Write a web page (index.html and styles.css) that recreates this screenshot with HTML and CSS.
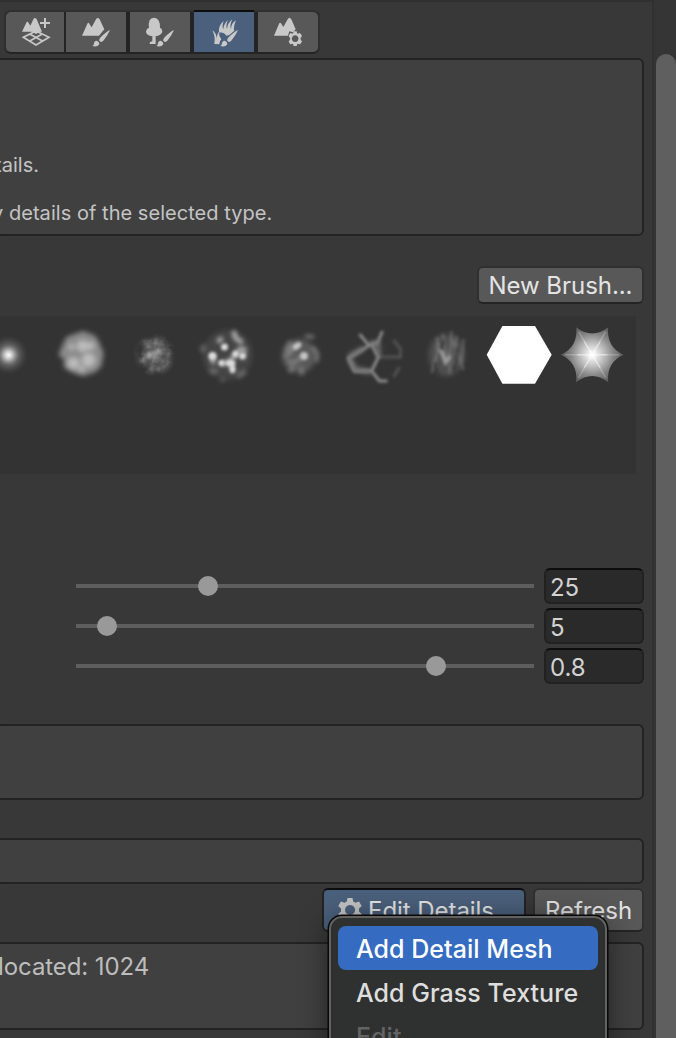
FILE: index.html
```html
<!DOCTYPE html>
<html lang="en">
<head>
<meta charset="utf-8">
<title>Terrain Details</title>
<link rel="stylesheet" href="styles.css">
</head>
<body>
<div class="window">
<main class="inspector">
  <nav class="toolbar">
    <button class="tool first"><svg width="58" height="40" viewBox="18 36 174 120"><path d="M66 95L80 66Q83 64 86 69L91 77 100 58Q105 50 110 58L126 95Z"/><path d="M135 54V84M120 69H150" class="line w6"/><path d="M70 112L108 93 147 112 108 135ZM89 102L129 124M127 102L88 124" class="line w5"/><path d="M93 94H123L108 102Z"/></svg></button>
    <button class="tool"><svg width="60" height="40" viewBox="198 36 180 120"><path d="M246 107L262 71Q265 66 268 71L275 82 288 58Q293 50 299 58L313 88 297 107Z"/><path d="M330 90Q319 94 300 114L297 121 303 127 310 122Q324 105 330 90ZM291 122Q300 127 297 134Q291 142 277 138Q282 136 282 129Q284 121 291 122Z"/></svg></button>
    <button class="tool"><svg width="60" height="40" viewBox="390 36 180 120"><path d="M447 84Q443 53 462 53Q481 54 480 84Q486 85 487 95Q483 108 462 109Q439 108 438 95Q440 85 447 84ZM457 108H467V132H449L450 126 457 124Z"/><path d="M522 90Q511 94 492 114L489 121 495 127 502 122Q516 105 522 90ZM483 122Q492 127 489 134Q483 142 469 138Q474 136 474 129Q476 121 483 122Z"/></svg></button>
    <button class="tool selected"><svg width="60" height="40" viewBox="102 36 180 120"><path d="M177 97Q174 79 191 62Q185 80 190 88Q190 73 204 60Q196 78 201 87Q202 70 217 58Q208 77 213 87Q213 70 228 61Q219 83 223 92L208 105 199 107Q192 97 177 97ZM163 132Q167 110 157 91Q169 98 171 120Q169 105 177 95Q176 108 184 118Q178 123 178 133Z"/><path d="M234 90Q223 94 204 114L201 121 207 127 214 122Q228 105 234 90ZM195 122Q204 127 201 134Q195 142 181 138Q186 136 186 129Q188 121 195 122Z"/></svg></button>
    <button class="tool last"><svg width="60" height="40" viewBox="294 36 180 120"><path d="M342 107L357 71Q360 66 364 71L370 81 383 58Q388 49 394 58L407 88 399 97 388 94 384 107Z"/><path fill-rule="evenodd" d="M401 94H410L412 101 420 99 426 107 421 116 426 125 420 133 412 131 410 138H401L399 131 391 133 386 125 391 116 386 107 391 99 399 101ZM405 106A10 10 0 1 0 406 106Z"/></svg></button>
  </nav>

  <section class="box help"><p>tails.</p><p class="second">y details of the selected type.</p></section>
  <button class="button brush-button">New Brush...</button>

  <section class="brushes">
    <svg class="hidden" width="0" height="0"><defs>
      <radialGradient id="dot"><stop stop-color="#fff"/><stop offset=".2" stop-color="#c5c5c5"/><stop offset=".5" stop-color="#777" stop-opacity=".7"/><stop offset="1" stop-color="#444" stop-opacity="0"/></radialGradient>
      <radialGradient id="star" gradientUnits="userSpaceOnUse" cx="0" cy="0" r="32"><stop stop-color="#fff"/><stop offset=".3" stop-color="#ccc"/><stop offset=".65" stop-color="#888"/><stop offset="1" stop-color="#555"/></radialGradient>
      <radialGradient id="fade"><stop stop-color="#fff"/><stop offset=".55" stop-color="#fff"/><stop offset="1" stop-color="#000"/></radialGradient>
      <mask id="round"><circle r="22" fill="url(#fade)"/></mask>
      <filter id="b1" x="-40%" y="-40%" width="180%" height="180%"><feGaussianBlur stdDeviation="1.4"/></filter>
      <filter id="b2" x="-40%" y="-40%" width="180%" height="180%"><feGaussianBlur stdDeviation="2.2"/></filter>
      <filter id="b3" x="-40%" y="-40%" width="180%" height="180%"><feGaussianBlur stdDeviation="2.8"/></filter>
      <filter id="noise" x="0" y="0" width="100%" height="100%"><feTurbulence type="fractalNoise" baseFrequency=".12" numOctaves="3" seed="4"/><feColorMatrix values="0 0 0 0 .6  0 0 0 0 .6  0 0 0 0 .6  2.2 0 0 0 -.8"/><feGaussianBlur stdDeviation=".7"/></filter>
    </defs></svg>
    <svg class="brush" viewBox="-36.5 -38 73 76"><circle r="20" fill="url(#dot)"/></svg>
    <svg class="brush" viewBox="-36.5 -38 73 76"><g filter="url(#b3)"><path d="M-15-18L-7-21 2-24 14-19 18-12 22-2 20 11 14 17 2 21-8 18-18 12-17 5-23 0-19-10Z" fill="#8b8b8b"/></g><g filter="url(#b3)" fill="#c8c8c8" opacity=".8"><circle cx="-8" cy="8" r="6"/><circle cx="7" cy="5" r="7"/><circle cx="1" cy="-9" r="6"/><circle cx="-10" cy="-8" r="3"/><circle cx="9" cy="-9" r="4"/><circle cx="0" cy="14" r="3"/></g></svg>
    <svg class="brush" viewBox="-36.5 -38 73 76"><g filter="url(#b2)" fill="#777" opacity=".75"><path d="M-12-13L0-17 8-17 12-9 17-2 17 9 10 17-5 17-9 9-16 9-13 2-11-5Z" opacity=".6"/><path d="M-8-3L1-8 9-4 2 4-6 2Z"/></g><g mask="url(#round)"><rect x="-22" y="-22" width="44" height="44" filter="url(#noise)" opacity=".4"/></g><g filter="url(#b1)" fill="#a5a5a5"><circle cx="-5" cy="0" r="3"/><circle cx="4" cy="-4" r="2.3"/><circle cx="0" cy="-2" r="2"/></g></svg>
    <svg class="brush" viewBox="-36.5 -38 73 76"><g filter="url(#b3)" fill="#777" opacity=".25"><circle r="25"/></g><g filter="url(#b2)" fill="none" stroke="#aaa" stroke-width="5"><path d="M-15 1L-14 9M-10-13L-5-17M6-24L8-17 15-12M-7 9L2 7 6 17M3 6L9-2 13-6 19-5M17-2L14 4"/><path d="M-25-3L-24-10M-18 16L-10 16M10 22L18 16M-6 24L-4 26" opacity=".4"/></g><g filter="url(#b1)" fill="#ddd"><circle cx="-3" cy="-8" r="3.5"/><circle cx="-15" cy="1" r="4"/><ellipse cx="3" cy="8" rx="5" ry="3"/><circle cx="-6" cy="8" r="3"/><circle cx="15" cy="1" r="3"/><ellipse cx="5" cy="14" rx="2.5" ry="4"/><circle cx="8" cy="-1" r="3"/></g></svg>
    <svg class="brush" viewBox="-36.5 -38 73 76"><g transform="translate(-1.5 0)"><g filter="url(#b3)"><circle r="17" cy="1" fill="#777" opacity=".55"/></g><g filter="url(#b2)" fill="none" stroke="#999" stroke-width="4"><path d="M-15 2L-9-2-4-8 0-12M-11-13L-6-8M4 1L-4 7-12 7M13-8L18-2 18 7M6-19L15-18M-10 17L-5 11M2 12L3 20M-14-7L-8-5" opacity=".6"/></g><g filter="url(#b1)" fill="#c4c4c4"><circle cx="5" cy="1" r="4"/><ellipse cx="-2" cy="-9" rx="5" ry="3" transform="rotate(-35 -2 -9)"/></g></g></svg>
    <svg class="brush" viewBox="-36.5 -38 73 76"><g filter="url(#b1)" fill="none" stroke="#8b8b8b" stroke-width="3"><path d="M-2-11L5 2-2 16-19 16-25 3-5-9-2-11 4-12 9-24M-5-10L-14-21M-2 16L6 26 14 26"/><path d="M5 2H27V-6L20-15M20 22L26 12" opacity=".35"/></g><g filter="url(#b2)" fill="none" stroke="#777" stroke-width="6" opacity=".75"><path d="M-24 4L-18 14-3 17M-4-11L4-12 5 1M-25 2L-10-7"/></g></svg>
    <svg class="brush" viewBox="-36.5 -38 73 76"><g filter="url(#b3)"><ellipse rx="18" ry="21" fill="#777" opacity=".4"/></g><g filter="url(#b1)" stroke-width="2.5" stroke="#999" fill="none"><path d="M-15 18L-7-10 0 8 6-14 17 15M-9-18L-10 5M-4-21L0 1M5-24L3 19M10-19L8 10M17-16L15 11" opacity=".38"/><path d="M-6-6L-1 7 4 1" stroke-width="4"/></g><path d="M-3-15L-5-5M11-7L8 16M-12 8L-9 18" stroke="#303030" stroke-width="2" filter="url(#b1)"/></svg>
    <svg class="brush" viewBox="-36.5 -38 73 76"><path transform="translate(-.8 0)" d="M-16.3-29H16.3L33-.3 16.3 28.7H-16.3L-32-.3Z" fill="#fff"/></svg>
    <svg class="brush" viewBox="-36.5 -38 73 76"><g transform="translate(-.3 -.3)"><path d="M-31.5 0Q-14-7.5-16-27.5Q0-15 16-27.5Q14-7.5 31.5 0Q14 7.5 16 27.5Q0 15-16 27.5Q-14 7.5-31.5 0Z" fill="url(#star)"/><path d="M-27 0H27M-13.5-23L13.5 23M13.5-23L-13.5 23" stroke="#fff" stroke-width="1.5" opacity=".22"/><path d="M-15 0H15M-8-13L8 13M8-13L-8 13" stroke="#fff" stroke-width="1.5" opacity=".35"/><circle r="4" fill="#fff" opacity=".5" filter="url(#b1)"/></g></svg>
  </section>

  <section class="settings">
    <div class="row"><div class="slider"><i class="thumb" style="margin-left:122px"></i></div><output class="field">25</output></div>
    <div class="row"><div class="slider"><i class="thumb" style="margin-left:21px"></i></div><output class="field">5</output></div>
    <div class="row"><div class="slider"><i class="thumb" style="margin-left:350px"></i></div><output class="field">0.8</output></div>
  </section>
  <section class="box details"></section>
  <section class="box summary"></section>
  <div class="actions"><button class="button edit"><svg width="24" height="24" viewBox="0 0 24 24"><path fill-rule="evenodd" d="M9.5 0H14.5L15.2 3.5 17.5 4.8 21 3.5 23.7 8 21 10.5V13.5L23.7 16 21 20.5 17.5 19.2 15.2 20.5 14.5 24H9.5L8.8 20.5 6.5 19.2 3 20.5.3 16 3 13.5V10.5L.3 8 3 3.5 6.5 4.8 8.8 3.5ZM12 7A5 5 0 1 0 12.1 7Z"/></svg><span>Edit Details...</span></button><button class="button">Refresh</button></div>
  <section class="box allocation"><p>located: 1024</p></section>
</main>
<aside class="scrollbar"><div class="scroll-thumb"></div></aside>
<div class="menu"><div class="item active">Add Detail Mesh</div><div class="item">Add Grass Texture</div><div class="item disabled">Edit</div></div>
</div>
</body>
</html>
```
FILE: styles.css
```css
* { box-sizing: border-box; }
body { margin: 0; background: #383838; font-family: Inter, "Liberation Sans", sans-serif; color: #c4c4c4; }
p { margin: 0; }
button { appearance: none; border: 0; padding: 0; margin: 0; font: inherit; color: inherit; }
.window { position: relative; width: 676px; height: 1038px; display: flex; overflow: hidden; }
.inspector { width: 654px; height: 1038px; overflow: hidden; border-top: 2px solid #303030; border-right: 2px solid #303030; display: flex; flex-direction: column; align-items: flex-start; flex: none; }
.toolbar { display: flex; margin: 8px 0 0 4px; padding: 2px; height: 44px; background: linear-gradient(#303030 2px, #242424 2px); border-radius: 7px; flex: none; }
.tool { height: 40px; background: #585858; display: flex; margin-right: 4px; }
.tool.first { border-radius: 5px 0 0 5px; margin-right: 2px; box-shadow: -2px 0 #303030; }
.tool.last { border-radius: 0 5px 5px 0; margin-right: 0; box-shadow: 2px 0 #303030; }
.tool.selected { background: #4b607c; box-shadow: 0 -2px #0d0d0d; }
.tool svg { fill: #c8c8c8; }
.line { fill: none; stroke: #c8c8c8; }
.w6 { stroke-width: 6; }
.w5 { stroke-width: 5; }
.box { width: 648px; margin-left: -4px; border: 2px solid #232323; border-radius: 6px; background: #404040; flex: none; }
.help { height: 178px; margin-top: 4px; padding: 93px 0 0 2px; font-size: 20px; line-height: 24px; letter-spacing: .04px; overflow: hidden; }
.help p { margin-left: -5px; white-space: pre; }
.help .second { margin-top: 24px; margin-left: -8px; }
.button { height: 38px; background: #585858; border: 2px solid #303030; border-bottom-color: #242424; border-radius: 6px; font-size: 24px; color: #e4e4e4; flex: none; letter-spacing: -.05px; display: flex; align-items: center; justify-content: center; }
.brush-button { width: 167px; margin: 30px 0 0 477px; }
.brushes { width: 636px; height: 158px; background: #333; margin-top: 12px; display: flex; align-items: flex-start; flex: none; overflow: hidden; }
.hidden { position: absolute; }
.brush { width: 73px; height: 76px; margin-top: 1px; flex: none; }
.hidden + .brush { margin-left: -28px; }
.settings { margin: 94px 0 0 76px; display: flex; flex-direction: column; gap: 4px; }
.row { display: flex; gap: 10px; align-items: center; }
.slider { width: 458px; height: 4px; background: #5e5e5e; display: flex; align-items: center; }
.thumb { width: 20px; height: 20px; border-radius: 50%; background: #999; flex: none; }
.field { width: 100px; height: 36px; background: #2a2a2a; border: 2px solid #212121; border-top-color: #0d0d0d; border-radius: 6px; padding-left: 4px; font-size: 24px; line-height: 35px; color: #d2d2d2; letter-spacing: -.1px; }
.details { height: 76px; margin-top: 40px; }
.summary { height: 46px; margin-top: 38px; }
.actions { display: flex; margin: 4px 0 0 322px; gap: 7px; flex: none; }
.actions .button { height: 44px; width: 111px; }
.actions .edit { width: 204px; background: #4b607c; border-color: #0d0d0d #232323 #232323; justify-content: flex-start; padding-left: 14px; gap: 6px; }
.edit svg { fill: #c4c4c4; }
.allocation { height: 88px; margin-top: 10px; padding: 8px 0 0 0; font-size: 24px; line-height: 30px; color: #bdbdbd; letter-spacing: -.08px; }
.scrollbar { width: 22px; background: #353535; padding: 54px 0 0 2px; }
.scroll-thumb { width: 20px; height: 1000px; background: #5f5f5f; border-radius: 10px; }
.menu { position: absolute; left: 329px; top: 916px; width: 278px; height: 160px; padding: 8px 7px; background: #2f3030; border: 2px solid #626262; border-radius: 13px; box-shadow: 0 0 0 1.5px #080808, 0 4px 30px #0007; }
.item { width: 260px; height: 44px; border-radius: 8px; padding-left: 18px; font-size: 25px; line-height: 46px; font-weight: 500; color: #dedede; letter-spacing: .04px; }
.item.active { background: #356bc0; color: #fff; }
.item.disabled { color: #626363; }
```
